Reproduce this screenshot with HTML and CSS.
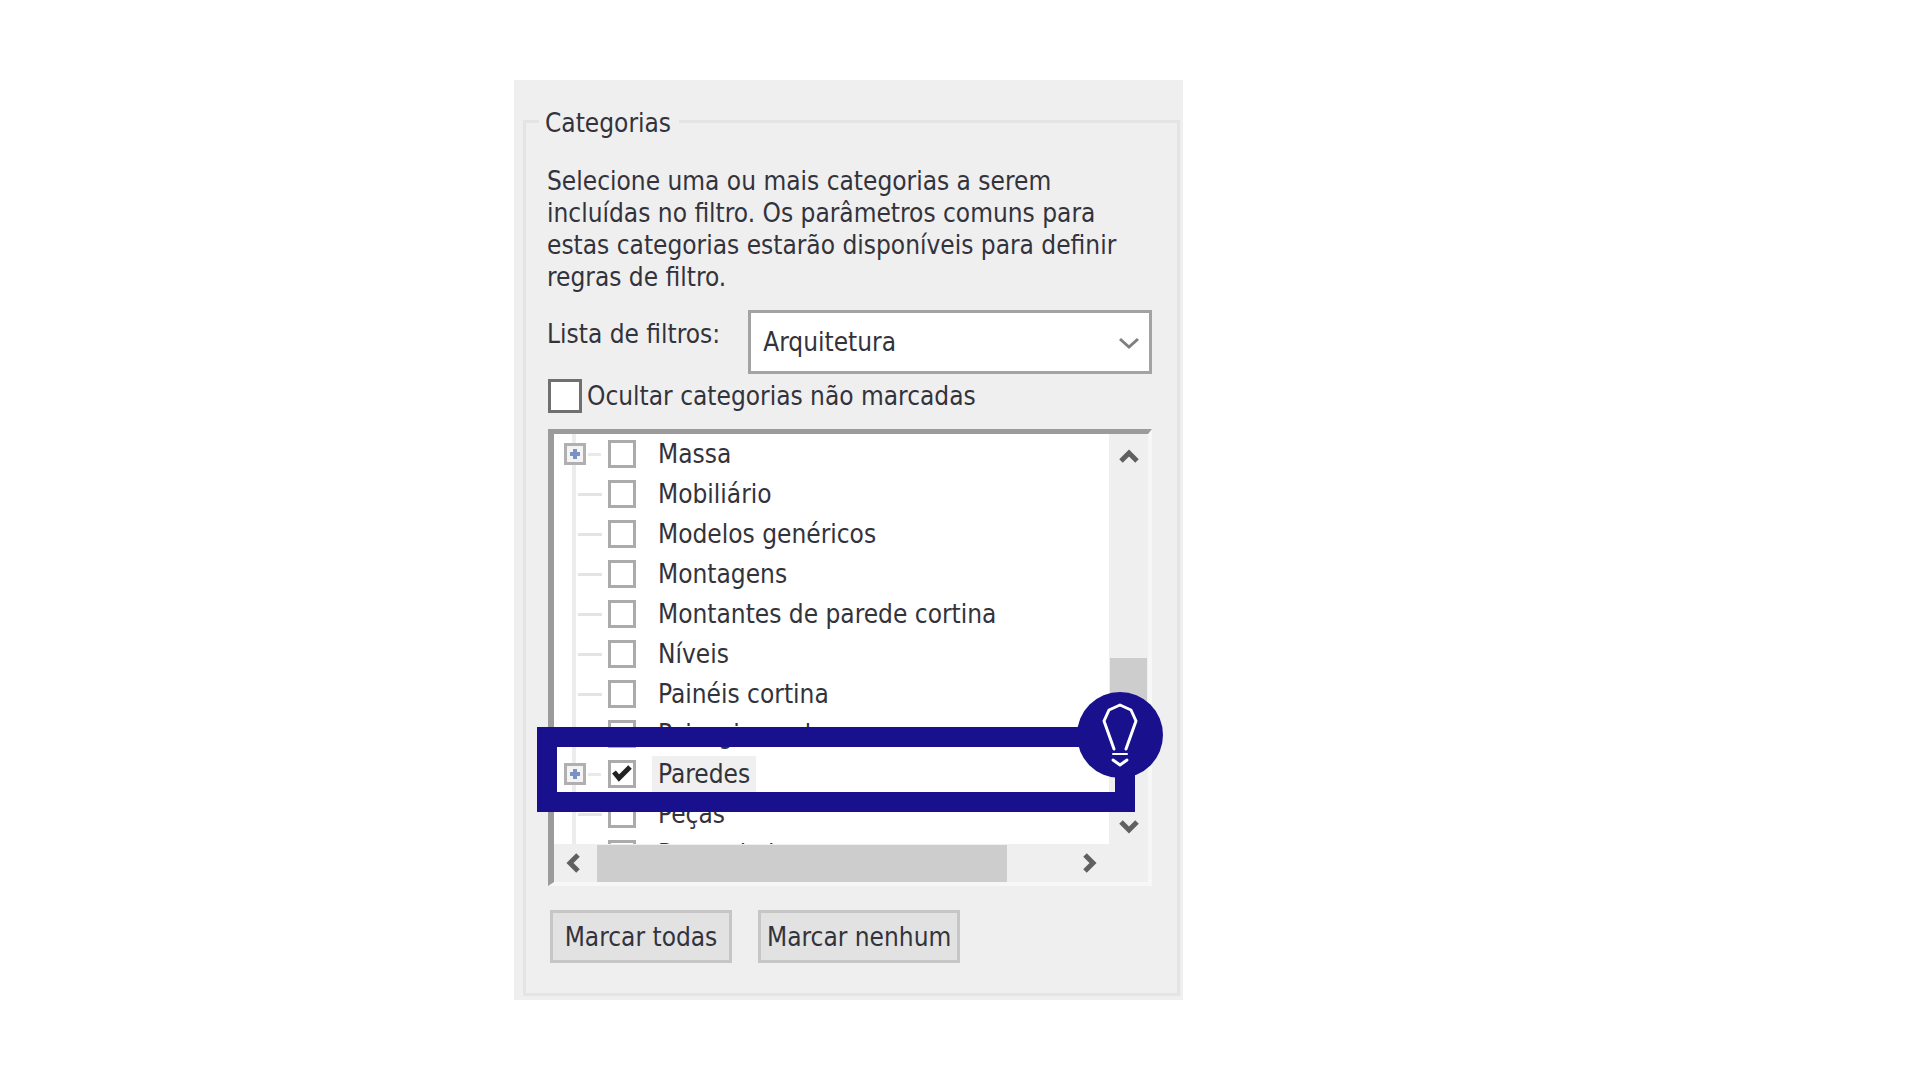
FILE: index.html
```
<!DOCTYPE html>
<html lang="pt-BR">
<head>
    <meta charset="utf-8">
    <title>Categorias</title>
    <link rel="stylesheet" href="styles.css">
</head>
<body>
    <div class="panel">
        <fieldset>
            <legend>Categorias</legend>
            <p>Selecione uma ou mais categorias a serem<br>
            incluídas no filtro. Os parâmetros comuns para<br>
            estas categorias estarão disponíveis para definir<br>
            regras de filtro.</p>

            <div class="filter-row">
                <label for="filtros">Lista de filtros:</label>
                <div class="select-box">
                    <select id="filtros">
                        <option>Arquitetura</option>
                    </select>
                    <svg class="arrow" width="24" height="16" viewBox="0 0 24 16"><path d="M3 3l9 8 9-8"/></svg>
                </div>
            </div>

            <label class="hide-row"><input type="checkbox">Ocultar categorias não marcadas</label>

            <div class="list-wrap">
                <div class="list">
                    <ul class="tree">
                        <li class="parent"><label><input type="checkbox"><span>Massa</span></label></li>
                        <li><label><input type="checkbox"><span>Mobiliário</span></label></li>
                        <li><label><input type="checkbox"><span>Modelos genéricos</span></label></li>
                        <li><label><input type="checkbox"><span>Montagens</span></label></li>
                        <li><label><input type="checkbox"><span>Montantes de parede cortina</span></label></li>
                        <li><label><input type="checkbox"><span>Níveis</span></label></li>
                        <li><label><input type="checkbox"><span>Painéis cortina</span></label></li>
                        <li><label><input type="checkbox"><span>Paisagismo duro</span></label></li>
                        <li class="parent selected"><label><input type="checkbox" checked><span>Paredes</span></label></li>
                        <li><label><input type="checkbox"><span>Peças</span></label></li>
                        <li><label><input type="checkbox"><span>Ponto de levantamento</span></label></li>
                    </ul>
                    <div class="vscroll">
                        <svg width="24" height="18" viewBox="0 0 24 18"><path d="M4 15l8-8 8 8"/></svg>
                        <div class="vthumb"></div>
                        <svg width="24" height="18" viewBox="0 0 24 18"><path d="M4 3l8 8 8-8"/></svg>
                    </div>
                    <div class="hscroll">
                        <svg width="18" height="24" viewBox="0 0 18 24"><path d="M14 4l-8 8 8 8"/></svg>
                        <div class="hthumb"></div>
                        <svg width="18" height="24" viewBox="0 0 18 24"><path d="M4 4l8 8-8 8"/></svg>
                    </div>
                </div>

                <!-- destaque da categoria marcada -->
                <div class="highlight">
                    <svg class="bulb" width="86" height="86" viewBox="0 0 86 86">
                        <circle cx="43" cy="43" r="43"/>
                        <path d="M37 57L27 29l5-11 11-5 11 5 5 11-10 28"/>
                        <path class="thin" d="M36 62h14"/>
                        <path d="M36 68l7 5 7-5"/>
                    </svg>
                </div>
            </div>

            <div class="buttons">
                <button type="button">Marcar todas</button>
                <button type="button">Marcar nenhum</button>
            </div>
        </fieldset>
    </div>
</body>
</html>
```
FILE: styles.css
```
* {
    box-sizing: border-box;
}
body {
    margin: 0;
    padding: 80px 0;
    background: #fff;
    color: #33333c;
    font: 26px/32px Tahoma, "DejaVu Sans Condensed", sans-serif;
    display: grid;
    grid-template-columns: 514fr 669fr 737fr;
}
.panel {
    grid-column: 2;
    background: #efefef;
    padding: 23px 3px 4px 9px;
}
fieldset {
    margin: 0;
    border: 3px solid #e4e4e4;
    padding: 26px 25px 30px 21px;
    min-width: 0;
}
legend {
    margin-left: -8px;
    padding: 4px 8px 0 6px;
}
p {
    margin: 0;
    white-space: nowrap;
}
input, select, button {
    font: inherit;
    color: inherit;
    margin: 0;
}
.filter-row {
    display: flex;
    gap: 28px;
    margin-top: 17px;
}
.filter-row label {
    padding-top: 8px;
}
.select-box {
    position: relative;
    flex: 1;
}
select {
    appearance: none;
    width: 100%;
    height: 64px;
    padding: 0 12px;
    background: #fff;
    border: 3px solid #a3a3a3;
    border-radius: 0;
}
svg path {
    fill: none;
    stroke: #606060;
    stroke-width: 5;
}
.arrow {
    position: absolute;
    right: 11px;
    top: 26px;
}
.arrow path {
    stroke: #808080;
    stroke-width: 3;
}
input[type=checkbox] {
    appearance: none;
    flex: none;
    background: #fff;
    border: 3px solid #ababab;
    width: 28px;
    height: 28px;
}
.hide-row {
    display: flex;
    align-items: center;
    gap: 5px;
    height: 34px;
    margin-top: 5px;
}
.hide-row input[type=checkbox] {
    width: 34px;
    height: 34px;
    border-color: #707070;
    margin-left: 1px;
}

/* lista */
.list-wrap {
    position: relative;
    margin: 16px 0 0 1px;
}
.list {
    display: grid;
    grid-template: 410px 38px / 1fr 39px;
    background: #efefef;
    border: solid;
    border-width: 5px 4px 4px 6px;
    border-color: #9b9b9b #f7f7f7 #f7f7f7 #9b9b9b;
}
.tree {
    list-style: none;
    margin: 0;
    padding: 0;
    overflow: hidden;
    background: linear-gradient(#ececec, #ececec) 18px 0 / 4px 100% no-repeat #fff;
}
.tree li {
    display: flex;
    align-items: center;
    height: 40px;
    padding-left: 10px;
}
.tree li::before {
    content: "";
    width: 24px;
    height: 3px;
    margin: 0 6px 0 14px;
    background: #e4e4e4;
}
.tree .parent::before {
    width: 38px;
    height: 22px;
    margin-left: 0;
    /* caixa de expandir com o sinal de mais */
    background:
        linear-gradient(#7d92c4, #7d92c4) 6px 9px / 10px 4px no-repeat,
        linear-gradient(#7d92c4, #7d92c4) 9px 6px / 4px 10px no-repeat,
        linear-gradient(#f4f4f4, #f4f4f4) 3px 3px / 16px 16px no-repeat,
        linear-gradient(#b0b0b0, #b0b0b0) 0 0 / 22px 22px no-repeat,
        linear-gradient(#e9e9e9, #e9e9e9) 24px 10px / 13px 3px no-repeat;
}
.tree label {
    display: flex;
    align-items: center;
    gap: 16px;
}
.tree span {
    padding: 2px 6px;
    white-space: nowrap;
}
.tree .selected span {
    background: #f0f0f0;
}
.tree input:checked {
    background: url("data:image/svg+xml,%3Csvg xmlns='http://www.w3.org/2000/svg' viewBox='0 0 22 22'%3E%3Cpath d='M3 9l5 6L19 4' fill='none' stroke='%23222' stroke-width='5'/%3E%3C/svg%3E") #fff;
}
.vscroll {
    display: flex;
    flex-direction: column;
    align-items: center;
    padding: 12px 0 7px;
}
.vthumb {
    width: 37px;
    height: 80px;
    margin: 194px 0 auto;
    background: #cdcdcd;
}
.hscroll {
    display: flex;
    align-items: center;
    padding: 0 10px;
}
.hthumb {
    flex: 0 1 410px;
    height: 37px;
    margin: 0 auto 0 15px;
    background: #cdcdcd;
}

.highlight {
    position: absolute;
    left: -11px;
    right: 17px;
    top: 298px;
    height: 85px;
    border: 20px solid #18108c;
}
.bulb {
    position: absolute;
    right: -48px;
    top: -55px;
}
.bulb circle {
    fill: #18108c;
}
.bulb path {
    stroke: #fff;
    stroke-width: 3;
    stroke-linecap: round;
    stroke-linejoin: round;
}
.bulb .thin {
    stroke-width: 2;
}

.buttons {
    display: flex;
    gap: 26px;
    margin: 24px 0 0 3px;
}
button {
    height: 53px;
    min-width: 182px;
    padding: 0 6px;
    background: #e2e2e2;
    border: 3px solid #c6c6c6;
}
```
